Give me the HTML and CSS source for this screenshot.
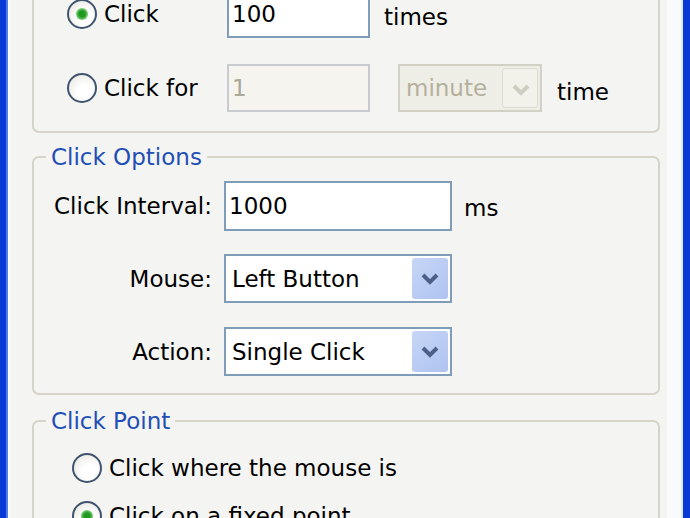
FILE: index.html
```html
<!DOCTYPE html>
<html lang="en">
<head>
    <meta charset="UTF-8" />
    <title>Auto Clicker</title>
    <link rel="stylesheet" href="styles.css">
</head>
<body>
<div class="window">
    <div class="content">
        <fieldset class="group group-repeat">
            <div class="repeat-row">
                <label class="radio-label">
                    <span class="radio checked"></span>
                    <span>Click</span>
                </label>
                <div class="field">100</div>
                <span class="unit">times</span>
            </div>
            <div class="repeat-row">
                <label class="radio-label">
                    <span class="radio"></span>
                    <span>Click for</span>
                </label>
                <div class="field disabled">1</div>
                <div class="select disabled">
                    <span class="select-text">minute</span>
                    <span class="select-btn">
                        <svg width="36" height="41" viewBox="0 0 36 41"><path d="M11 17 L18 24 L25 17" fill="none" stroke="#cfcdc2" stroke-width="4"/></svg>
                    </span>
                </div>
                <span class="unit">time</span>
            </div>
        </fieldset>

        <fieldset class="group group-options">
            <legend>Click Options</legend>
            <div class="options-grid">
                <span class="opt-label">Click Interval:</span>
                <div class="field">1000</div>
                <span class="unit">ms</span>

                <span class="opt-label">Mouse:</span>
                <div class="select">
                    <span class="select-text">Left Button</span>
                    <span class="select-btn">
                        <svg width="36" height="41" viewBox="0 0 36 41"><path d="M11 17 L18 24 L25 17" fill="none" stroke="#4c5f86" stroke-width="4"/></svg>
                    </span>
                </div>
                <span></span>

                <span class="opt-label">Action:</span>
                <div class="select">
                    <span class="select-text">Single Click</span>
                    <span class="select-btn">
                        <svg width="36" height="41" viewBox="0 0 36 41"><path d="M11 17 L18 24 L25 17" fill="none" stroke="#4c5f86" stroke-width="4"/></svg>
                    </span>
                </div>
                <span></span>
            </div>
        </fieldset>

        <fieldset class="group group-point">
            <legend>Click Point</legend>
            <div class="point-list">
                <label class="radio-label point-row">
                    <span class="radio"></span>
                    <span>Click where the mouse is</span>
                </label>
                <label class="radio-label point-row">
                    <span class="radio checked"></span>
                    <span>Click on a fixed point</span>
                </label>
            </div>
        </fieldset>
    </div>
</div>
</body>
</html>
```

FILE: styles.css
```css
body {
    margin: 0;
    height: 518px;
    overflow: hidden;
    font-family: "DejaVu Sans", Verdana, sans-serif;
    font-size: 23px;
    color: #000;
}

.window {
    display: flow-root;
    height: 518px;
    overflow: hidden;
    background-color: #f4f4f2;
    border-left: 6px solid #0a3ad6;
    border-right: 7px solid #0a3ad6;
    box-shadow: inset 2px 0 0 #4f7ee9, inset 4px 0 0 #fafbfe, inset -2px 0 0 #dfe7fb, inset -16px 0 0 #f9fafc;
}

.content {
    padding: 0 23px 0 26px;
}

.group {
    margin: 0;
    padding: 0;
    border: 2px solid #d6d4c8;
    border-radius: 7px;
}

.group legend {
    margin-left: 12px;
    padding: 0 5px;
    line-height: 28px;
    color: #1f4fb6;
}

/* repeat box */
.group-repeat {
    margin-top: -40px;
    padding: 28px 0 19px 33px;
    display: flex;
    flex-direction: column;
    gap: 26px;
}

.repeat-row {
    display: flex;
    align-items: center;
    height: 48px;
}

.repeat-row .radio-label {
    width: 160px;
}

.repeat-row .field {
    width: 143px;
    height: 48px;
}

.repeat-row .select {
    width: 144px;
    height: 48px;
    margin-left: 28px;
}

.repeat-row .unit {
    margin-left: 14px;
}

.repeat-row:last-child .unit {
    margin-left: 15px;
    padding-top: 8px;
}

.repeat-row:first-child .unit {
    padding-top: 6px;
}

/* radios */
.radio-label {
    display: flex;
    align-items: center;
    gap: 7px;
}

.radio {
    width: 26px;
    height: 26px;
    flex-shrink: 0;
    border-radius: 50%;
    border: 2px solid #3f546f;
    background: radial-gradient(circle at 60% 65%, #ffffff 30%, #e4e3dc 100%);
    position: relative;
}

.radio.checked::after {
    content: "";
    position: absolute;
    left: 7px;
    top: 7px;
    width: 12px;
    height: 12px;
    border-radius: 50%;
    background: radial-gradient(circle, #1f9a1f 35%, #7fd07f 70%, #d9f2d9 100%);
}

/* fields */
.field {
    box-sizing: border-box;
    display: flex;
    align-items: center;
    padding-left: 3px;
    background-color: #fff;
    border: 2px solid #7f9db9;
}

.field.disabled {
    background-color: #f5f4ef;
    border-color: #c8cad0;
    color: #aca899;
}

.select {
    box-sizing: border-box;
    display: flex;
    align-items: center;
    justify-content: space-between;
    padding: 2px 2px 2px 6px;
    background-color: #fff;
    border: 2px solid #7f9db9;
}

.select-btn {
    width: 36px;
    height: 41px;
    border-radius: 3px;
    background: linear-gradient(135deg, #c7d6f7, #aec3f0);
}

.select-btn svg {
    display: block;
}

.select.disabled {
    background-color: #efeee6;
    border-color: #d3d1c6;
    color: #b4b09e;
    padding-left: 6px;
}

.select.disabled .select-btn {
    height: 40px;
    background: #f2f1ea;
    border: 1px solid #dedcd2;
    box-sizing: border-box;
}

/* options box */
.group-options {
    margin-top: 10px;
    padding: 10px 0 17px 0;
}

.options-grid {
    display: grid;
    grid-template-columns: 178px 228px auto;
    grid-auto-rows: 49px;
    column-gap: 12px;
    row-gap: 24px;
    align-items: center;
}

.options-grid .field,
.options-grid .select {
    height: 49px;
}

.options-grid .field {
    height: 50px;
}

.opt-label {
    text-align: right;
}

.options-grid .unit {
    padding-top: 4px;
}

/* point box */
.group-point {
    margin-top: 12px;
    padding: 18px 0 20px 0;
}

.point-list {
    display: flex;
    flex-direction: column;
    gap: 18px;
    padding-left: 38px;
}

.point-row {
    height: 30px;
}
```
